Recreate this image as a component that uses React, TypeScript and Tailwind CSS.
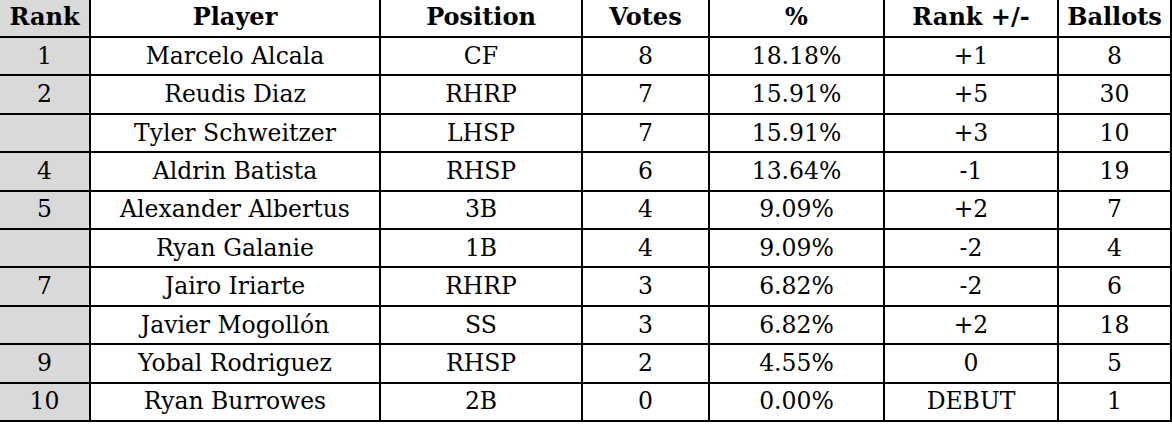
import React from "react";

type Row = {
  rank: string;
  player: string;
  position: string;
  votes: string;
  pct: string;
  change: string;
  ballots: string;
};

const rows: Row[] = [
  { rank: "1", player: "Marcelo Alcala", position: "CF", votes: "8", pct: "18.18%", change: "+1", ballots: "8" },
  { rank: "2", player: "Reudis Diaz", position: "RHRP", votes: "7", pct: "15.91%", change: "+5", ballots: "30" },
  { rank: "", player: "Tyler Schweitzer", position: "LHSP", votes: "7", pct: "15.91%", change: "+3", ballots: "10" },
  { rank: "4", player: "Aldrin Batista", position: "RHSP", votes: "6", pct: "13.64%", change: "-1", ballots: "19" },
  { rank: "5", player: "Alexander Albertus", position: "3B", votes: "4", pct: "9.09%", change: "+2", ballots: "7" },
  { rank: "", player: "Ryan Galanie", position: "1B", votes: "4", pct: "9.09%", change: "-2", ballots: "4" },
  { rank: "7", player: "Jairo Iriarte", position: "RHRP", votes: "3", pct: "6.82%", change: "-2", ballots: "6" },
  { rank: "", player: "Javier Mogollón", position: "SS", votes: "3", pct: "6.82%", change: "+2", ballots: "18" },
  { rank: "9", player: "Yobal Rodriguez", position: "RHSP", votes: "2", pct: "4.55%", change: "0", ballots: "5" },
  { rank: "10", player: "Ryan Burrowes", position: "2B", votes: "0", pct: "0.00%", change: "DEBUT", ballots: "1" },
];

// column widths include the 2px right border
const cell = "flex items-end justify-center border-r-2 border-black leading-none whitespace-nowrap";

const App = () => {
  return (
    <div
      className="w-[1172px] h-[424px] overflow-hidden bg-white text-black text-[23.5px]"
      style={{ fontFamily: '"DejaVu Serif", Georgia, serif' }}
    >
      {/* Header */}
      <div className="flex h-[38px] border-b-2 border-black font-bold text-[24px] [&>div]:pb-[7px]">
        <div className={`${cell} w-[91px] bg-[#d9d9d9]`}>Rank</div>
        <div className={`${cell} w-[290px]`}>Player</div>
        <div className={`${cell} w-[202px]`}>Position</div>
        <div className={`${cell} w-[127px]`}>Votes</div>
        <div className={`${cell} w-[175px]`}>%</div>
        <div className={`${cell} w-[174px]`}>Rank +/-</div>
        <div className={`${cell} flex-1 border-r-0`}>Ballots</div>
      </div>
      {rows.map((r, i) => (
        <div key={i} className="flex h-[38.4px] border-b-2 border-black [&>div]:pb-[6px]">
          <div className={`${cell} w-[91px] bg-[#d9d9d9]`}>{r.rank}</div>
          <div className={`${cell} w-[290px]`}>{r.player}</div>
          <div className={`${cell} w-[202px]`}>{r.position}</div>
          <div className={`${cell} w-[127px]`}>{r.votes}</div>
          <div className={`${cell} w-[175px]`}>{r.pct}</div>
          <div className={`${cell} w-[174px]`}>{r.change}</div>
          <div className={`${cell} flex-1 border-r-0`}>{r.ballots}</div>
        </div>
      ))}
    </div>
  );
};

export default App;
